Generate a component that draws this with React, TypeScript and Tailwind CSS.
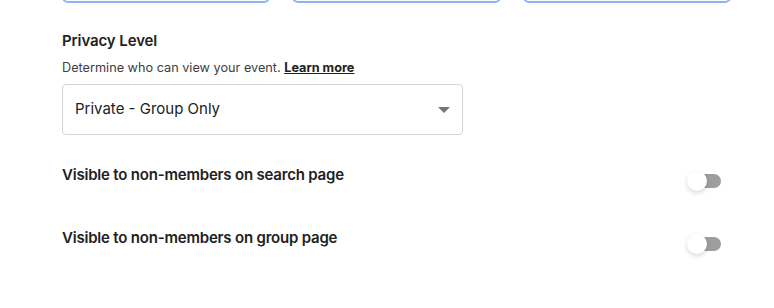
import { useState } from 'react';

function Toggle({ on, onChange }: { on: boolean; onChange: () => void }) {
  return (
    <button
      onClick={onChange}
      className="relative w-[34px] h-[20px] flex items-center"
      aria-pressed={on}
    >
      <span className="absolute left-[10px] w-[24px] h-[14px] rounded-full bg-[#9e9e9e]" />
      <span className="absolute left-0 w-[20px] h-[20px] rounded-full bg-white shadow-[0_2px_5px_rgba(0,0,0,0.16)]" />
    </button>
  );
}

export default function App() {
  const [search, setSearch] = useState(false);
  const [group, setGroup] = useState(false);

  return (
    <div
      className="w-[774px] h-[308px] bg-white overflow-hidden text-[#212121]"
      style={{ fontFamily: 'Inter, "Open Sans", sans-serif' }}
    >
      <div className="pl-[62px] pr-[43px]">
        <div className="grid grid-cols-3 gap-[22px] -mt-[37px]">
          <div className="h-[40px] rounded-md border-2 border-[#8ab4f8]" />
          <div className="h-[40px] rounded-md border-2 border-[#8ab4f8]" />
          <div className="h-[40px] rounded-md border-2 border-[#8ab4f8]" />
        </div>

        <h2 className="mt-[28px] text-[15px] font-semibold leading-5 tracking-[-0.1px]">
          Privacy Level
        </h2>
        <p className="mt-[7px] text-[12.7px] leading-5 text-[#3d3d3d]">
          Determine who can view your event.{' '}
          <a href="#" className="font-bold underline text-[#212121]">
            Learn more
          </a>
        </p>

        <div className="mt-[6px] w-[401px] h-[51px] shrink-0 rounded border border-[#d4d4d4] flex items-center justify-between pl-[12px] pr-[12px]">
          <span className="text-[15px]">Private - Group Only</span>
          <svg width="12" height="6" viewBox="0 0 12 6">
            <path d="M0 0h12L6 6z" fill="#757575" />
          </svg>
        </div>

        <div className="mt-[30px] flex justify-between items-start">
          <span className="text-[15px] font-semibold leading-5 tracking-[-0.2px]">
            Visible to non-members on search page
          </span>
          <div className="mt-[6px] mr-[10px]">
            <Toggle on={search} onChange={() => setSearch(!search)} />
          </div>
        </div>

        <div className="mt-[37px] flex justify-between items-start">
          <span className="text-[15px] font-semibold leading-5 tracking-[-0.2px]">
            Visible to non-members on group page
          </span>
          <div className="mt-[6px] mr-[10px]">
            <Toggle on={group} onChange={() => setGroup(!group)} />
          </div>
        </div>
      </div>
    </div>
  );
}
